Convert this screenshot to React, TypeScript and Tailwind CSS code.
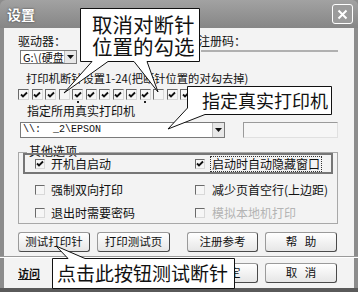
import React from "react";

const Check = () => (
  <svg width="8" height="8" viewBox="0 0 8 8" className="block">
    <path d="M1 3.5 L3 5.5 L7 1.5" fill="none" stroke="#111" strokeWidth="1.8" />
  </svg>
);

function Box({ checked = false, size = 11 }: { checked?: boolean; size?: number }) {
  return (
    <div
      className="flex items-center justify-center border-t border-l border-r border-b border-t-[#6a6a6a] border-l-[#6a6a6a] border-r-[#d8d8d8] border-b-[#d8d8d8] bg-[#f6f6f6] shrink-0"
      style={{ width: size, height: size }}
    >
      {checked && <Check />}
    </div>
  );
}

function Btn({ children, w, ml = 0 }: { children: React.ReactNode; w: number; ml?: number }) {
  return (
    <div
      className="h-[20px] flex items-center justify-center rounded-[3px] border border-[#9a9a9a] border-r-[#4a4a4a] border-b-[#4a4a4a] bg-gradient-to-b from-[#ffffff] to-[#e6e6e6] text-[11.5px] text-[#111] shrink-0"
      style={{ width: w, marginLeft: ml }}
    >
      {children}
    </div>
  );
}

const Arrow = () => (
  <div className="w-[12px] h-full flex items-center justify-center bg-[#e8e8e8] border-l border-[#bdbdbd] shrink-0">
    <svg width="7" height="4" viewBox="0 0 7 4">
      <path d="M0 0 H7 L3.5 4 Z" fill="#111" />
    </svg>
  </div>
);

export default function App() {
  const tops = Array.from({ length: 23 }, (_, i) => i !== 3 && i !== 10);
  return (
    <div className="relative w-[358px] h-[292px] overflow-hidden bg-[#8c8c8c] font-['Noto_Sans_CJK_SC',sans-serif] text-[#111]">
      {/* title bar */}
      <div className="h-[28px] flex items-center justify-between pl-[7px] pr-[5px] bg-gradient-to-b from-[#a2a2a2] to-[#868686] rounded-t-[6px]">
        <span className="text-white font-bold text-[14px] leading-none [text-shadow:0_0_2px_#333]">设置</span>
        <div className="w-[21px] h-[20px] rounded-[3px] border border-white bg-[#9b9b9b] flex items-center justify-center">
          <svg width="11" height="11" viewBox="0 0 11 11">
            <path d="M1.5 1.5 L9.5 9.5 M9.5 1.5 L1.5 9.5" stroke="#fff" strokeWidth="2" />
          </svg>
        </div>
      </div>

      {/* body */}
      <div className="mx-[4px] h-[260px] bg-[#f3f3f3] flex flex-col text-[12px] leading-none">
        <div className="mt-[6px] h-[13px] flex items-center pl-[14px]">
          <span className="w-[180px]">驱动器：</span>
          <span>注册码：</span>
        </div>
        <div className="mt-[3px] h-[14px] flex pl-[16px]">
          <div className="w-[57px] h-full flex border border-[#7a7a7a] bg-white">
            <span className="flex-1 pl-[2px] text-[11px] leading-[12px] overflow-hidden whitespace-nowrap">G:\(硬盘</span>
            <Arrow />
          </div>
          <div className="ml-[124px] w-[137px] h-[3px] border-t-2 border-[#b0b0b0]" />
        </div>
        <div className="mt-[8px] h-[13px] pl-[22px] flex items-center whitespace-nowrap text-[11.3px]">
          打印机断针设置1-24(把断针位置的对勾去掉)
        </div>
        <div className="mt-[4px] h-[11px] pl-[14px] flex gap-[2.5px]">
          {tops.map((c, i) => (
            <Box key={i} checked={c} />
          ))}
        </div>
        <div className="mt-[4px] h-[13px] flex items-center pl-[23px]">
          <span className="w-[226px]">指定所用真实打印机</span>
          <span className="-mt-[3px] text-[#333]">自检打印页数</span>
        </div>
        <div className="mt-[5px] h-[16px] flex pl-[16px]">
          <div className="w-[205px] h-full flex border border-[#7a7a7a] bg-white">
            <span className="flex-1 pl-[2px] font-['Liberation_Mono',monospace] text-[10px] leading-[14px] whitespace-pre">{"\\\\:  _2\\EPSON"}</span>
            <Arrow />
          </div>
          <div className="ml-[18px] w-[95px] h-full border border-[#9a9a9a] border-r-[#e0e0e0] border-b-[#e0e0e0] bg-[#f6f6f6]" />
        </div>

        {/* group box */}
        <div className="relative mt-[14px] ml-[14px] w-[320px] h-[72px] border border-[#a8a8a8] flex flex-col">
          <span className="absolute -top-[8px] left-[8px] px-[2px] bg-[#f3f3f3] text-[12px] leading-[12px]">其他选项</span>
          <div className="mx-[4px] h-[21px] border-2 border-[#767676] flex items-center relative">
            <div className="w-[170px] pl-[10px] flex items-center gap-[6px]">
              <Box checked size={10} />
              <span>开机自启动</span>
            </div>
            <div className="flex items-center gap-[5px]">
              <Box checked size={10} />
              <span className="border border-dotted border-[#333] px-[1px] py-[1px]">启动时自动隐藏窗口</span>
            </div>
          </div>
          <div className="mt-[8px] h-[16px] flex items-center">
            <div className="w-[176px] pl-[16px] flex items-center gap-[6px]">
              <Box size={10} />
              <span>强制双向打印</span>
            </div>
            <div className="flex items-center gap-[7px]">
              <Box size={10} />
              <span>减少页首空行(上边距)</span>
            </div>
          </div>
          <div className="mt-[7px] h-[16px] flex items-center">
            <div className="w-[176px] pl-[16px] flex items-center gap-[6px]">
              <Box size={10} />
              <span>退出时需要密码</span>
            </div>
            <div className="flex items-center gap-[7px]">
              <Box size={10} />
              <span className="text-[#b4b4b4]">模拟本地机打印</span>
            </div>
          </div>
        </div>

        {/* buttons */}
        <div className="mt-[8px] flex pl-[14px]">
          <Btn w={72}>测试打印针</Btn>
          <Btn w={73} ml={7}>打印测试页</Btn>
          <Btn w={71} ml={17}>注册参考</Btn>
          <Btn w={72} ml={7}>帮&nbsp;&nbsp;&nbsp;助</Btn>
        </div>
        <div className="mt-[4px] -mx-[4px] h-[2px] border-t border-[#9a9a9a] border-b border-b-white" />
        <div className="mt-[5px] flex items-center pl-[14px]">
          <span className="w-[169px] text-[11px] font-bold underline">访问</span>
          <Btn w={71}>确&nbsp;&nbsp;&nbsp;&nbsp;&nbsp;定</Btn>
          <Btn w={72} ml={7}>取&nbsp;&nbsp;&nbsp;消</Btn>
        </div>
      </div>
      <div className="h-[4px] bg-[#5a5a5a]" />

      {/* dots */}
      <div className="absolute left-[77px] top-[101px] w-[2px] h-[2px] bg-[#222]" />
      <div className="absolute left-[144px] top-[101px] w-[2px] h-[2px] bg-[#222]" />

      {/* callout outlines */}
      <svg className="absolute inset-0 pointer-events-none" width="358" height="292" viewBox="0 0 358 292">
        <path
          d="M80.5 8.5 H199.5 V61.5 H147 L158 92 L134 61.5 H108 L64 93 L92 61.5 H80.5 Z"
          fill="#fff"
          stroke="#111"
          strokeWidth="1"
        />
        <path
          d="M187.5 86.5 H331.5 V114.5 H205 L168 129 L187.5 108 Z"
          fill="#fff"
          stroke="#111"
          strokeWidth="1"
        />
        <path
          d="M52.5 258.5 H68 L56 246 L85 258.5 H234.5 V288.5 H52.5 Z"
          fill="#fff"
          stroke="#111"
          strokeWidth="1"
        />
      </svg>

      {/* callout texts */}
      <div className="absolute left-[81px] top-[13px] w-[118px] pl-[11px] text-[20.5px] leading-[22px] whitespace-nowrap">
        <div>取消对断针</div>
        <div>位置的勾选</div>
      </div>
      <div className="absolute left-[188px] top-[89px] pl-[14px] text-[18px] leading-[22px] whitespace-nowrap">
        指定真实打印机
      </div>
      <div className="absolute left-[53px] top-[261px] pl-[4px] text-[19px] leading-[24px] whitespace-nowrap">
        点击此按钮测试断针
      </div>
    </div>
  );
}
